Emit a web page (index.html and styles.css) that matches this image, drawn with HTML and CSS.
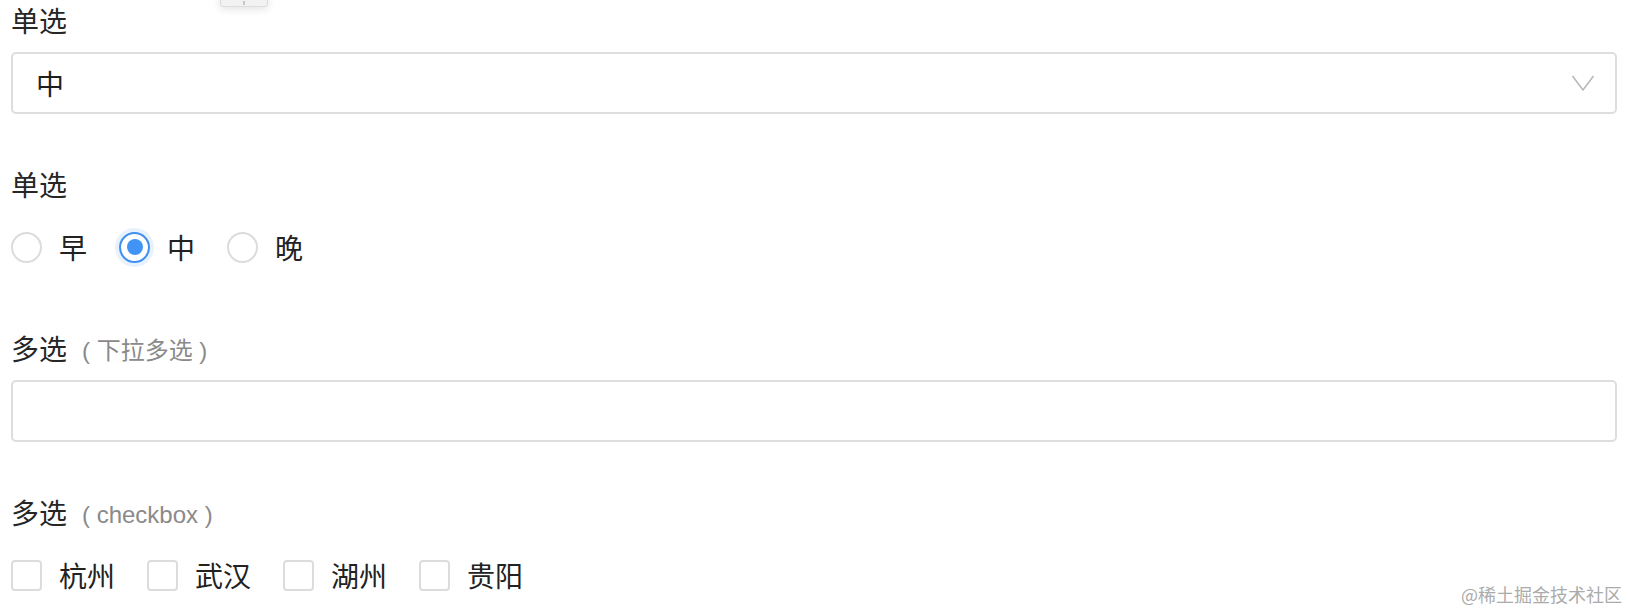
FILE: index.html
```html
<!DOCTYPE html>
<html lang="zh-CN">
<head>
<meta charset="utf-8">
<title>表单</title>
<link rel="stylesheet" href="styles.css">
</head>
<body>
<div class="popover-tip"><span class="tip-mark"></span></div>
<form class="form">
  <div class="item">
    <div class="label">单选</div>
    <div class="select">
      <span class="select-value">中</span>
      <svg class="chevron" width="24" height="18" viewBox="0 0 24 18"><path d="M1.5 2 L12 16 L22.5 2" fill="none" stroke="#b8b8b8" stroke-width="1.6"/></svg>
    </div>
  </div>
  <div class="item">
    <div class="label">单选</div>
    <div class="choices">
      <label class="choice"><span class="radio"></span><span class="choice-text">早</span></label>
      <label class="choice"><span class="radio checked"><span class="dot"></span></span><span class="choice-text">中</span></label>
      <label class="choice"><span class="radio"></span><span class="choice-text">晚</span></label>
    </div>
  </div>
  <div class="item">
    <div class="label">多选<span class="hint">( 下拉多选 )</span></div>
    <div class="select"></div>
  </div>
  <div class="item">
    <div class="label">多选<span class="hint">( checkbox )</span></div>
    <div class="choices">
      <label class="choice wide"><span class="checkbox"></span><span class="choice-text">杭州</span></label>
      <label class="choice wide"><span class="checkbox"></span><span class="choice-text">武汉</span></label>
      <label class="choice wide"><span class="checkbox"></span><span class="choice-text">湖州</span></label>
      <label class="choice wide"><span class="checkbox"></span><span class="choice-text">贵阳</span></label>
    </div>
  </div>
</form>
<div class="watermark">@稀土掘金技术社区</div>
</body>
</html>
```
FILE: styles.css
```css
html, body {
  margin: 0;
  padding: 0;
  background: #ffffff;
  width: 1628px;
  height: 610px;
  overflow: hidden;
}
body {
  font-family: "Noto Sans CJK SC", "Noto Sans", sans-serif;
  color: #222222;
  position: relative;
}
.form {
  padding: 2px 11px 0 11px;
}
.item {
  margin-bottom: 52px;
}
.item:last-child {
  margin-bottom: 0;
}
.label {
  font-size: 28px;
  line-height: 36px;
  height: 36px;
  color: #262626;
  display: flex;
  align-items: center;
  margin-bottom: 14px;
}
.hint {
  font-family: "Liberation Sans", "Noto Sans CJK SC", sans-serif;
  font-size: 24px;
  line-height: 30px;
  color: #8a8a8a;
  margin-left: 15px;
  padding-top: 6px;
}
.select {
  box-sizing: border-box;
  height: 62px;
  border: 2px solid #dedede;
  border-radius: 5px;
  display: flex;
  align-items: center;
  justify-content: space-between;
  padding: 0 20px 0 23px;
}
.select-value {
  font-size: 28px;
  color: #1f1f1f;
}
.chevron {
  display: block;
}
.choices {
  height: 62px;
  display: flex;
  align-items: center;
}
.choice {
  display: flex;
  align-items: center;
  margin-right: 32px;
}
.choice-text {
  font-size: 28px;
  color: #222222;
  margin-left: 17px;
}
.radio {
  box-sizing: border-box;
  width: 31px;
  height: 31px;
  border: 2px solid #dcdcdc;
  border-radius: 50%;
  display: flex;
  align-items: center;
  justify-content: center;
  background: #fff;
}
.radio.checked {
  border-color: #3f8ff0;
  box-shadow: 0 0 0 4px #e8f2fe;
}
.dot {
  width: 16px;
  height: 16px;
  border-radius: 50%;
  background: #4194f6;
}
.checkbox {
  box-sizing: border-box;
  width: 31px;
  height: 31px;
  border: 2px solid #dcdcdc;
  border-radius: 4px;
  background: #fff;
}
.popover-tip {
  position: absolute;
  left: 220px;
  top: -6px;
  width: 48px;
  height: 13px;
  box-sizing: border-box;
  background: #f2f2f2;
  border: 1px solid #dddddd;
  border-radius: 3px;
  box-shadow: 0 2px 8px rgba(0,0,0,0.12);
  display: flex;
  justify-content: center;
}
.tip-mark {
  width: 2px;
  height: 4px;
  margin-top: 6px;
  background: #c8c8c8;
}
.watermark {
  position: absolute;
  right: 6px;
  bottom: 5px;
  font-size: 18px;
  line-height: 22px;
  color: #ababab;
  font-family: "Noto Sans CJK SC", sans-serif;
}
```
